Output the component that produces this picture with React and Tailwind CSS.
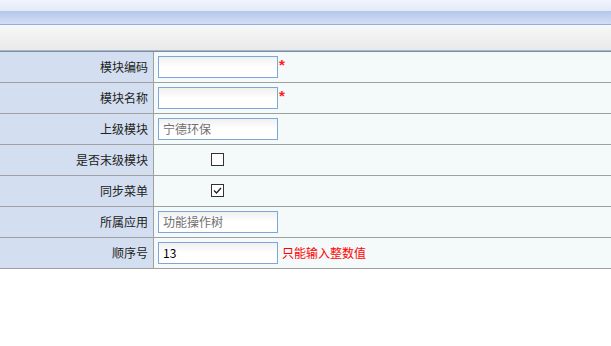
import React from "react";

const font = { fontFamily: '"Microsoft YaHei", "Noto Sans CJK SC", "Noto Sans", sans-serif' };

function Row({ label, children }) {
  return (
    <div className="flex h-[31px] border-b border-[#a0a0a0]">
      <div className="w-[154px] shrink-0 border-r border-[#a0a0a0] bg-[#d3dff0] flex items-center justify-end pr-[5px] text-[12px] text-[#222]">
        {label}
      </div>
      <div className="flex-1 bg-[#f4f9fa] flex items-center pl-[4px]">{children}</div>
    </div>
  );
}

function Input({ value, gray }) {
  return (
    <div
      className={
        "w-[120px] h-[22px] border border-[#80a6d8] flex items-center pl-[4px] text-[12px] " +
        (gray ? "text-[#707070]" : "text-black") +
        " bg-gradient-to-b from-[#f0f0f0] via-white to-white"
      }
    >
      {value}
    </div>
  );
}

function Star() {
  return (
    <span
      className="self-start mt-[5px] ml-[1px] text-[#ff2020] text-[15px] font-bold leading-none"
      style={{ fontFamily: '"Liberation Sans", sans-serif' }}
    >
      *
    </span>
  );
}

function Checkbox({ checked }) {
  return (
    <div className="ml-[53px] -mt-[1px] w-[13px] h-[13px] border border-[#333] bg-white flex items-center justify-center">
      {checked && (
        <svg width="11" height="11" viewBox="0 0 11 11">
          <path d="M2 5.5 L4.5 8 L9 3" fill="none" stroke="#222" strokeWidth="1.3" />
        </svg>
      )}
    </div>
  );
}

export default function App() {
  return (
    <div className="w-[611px] h-[346px] bg-white overflow-hidden" style={font}>
      <div className="h-[25px] border-b border-[#8db2e3] flex flex-col">
        <div className="h-[11px] bg-gradient-to-b from-[#f2f5fd] to-[#e2e9f8]" />
        <div className="flex-1 bg-gradient-to-b from-[#b3c7ec] to-[#d3def3]" />
      </div>
      <div className="h-[26px] border-b border-[#99bbe8] bg-gradient-to-b from-[#f8f8f8] to-[#e9e9e9]" />
      <div className="border-t border-[#8a8a8a]">
        <Row label="模块编码">
          <Input value="" />
          <Star />
        </Row>
        <Row label="模块名称">
          <Input value="" />
          <Star />
        </Row>
        <Row label="上级模块">
          <Input value="宁德环保" gray />
        </Row>
        <Row label="是否末级模块">
          <Checkbox />
        </Row>
        <Row label="同步菜单">
          <Checkbox checked />
        </Row>
        <Row label="所属应用">
          <Input value="功能操作树" gray />
        </Row>
        <Row label="顺序号">
          <Input value="13" />
          <span className="ml-[4px] text-[12px] text-[#ff0000]">只能输入整数值</span>
        </Row>
      </div>
    </div>
  );
}
